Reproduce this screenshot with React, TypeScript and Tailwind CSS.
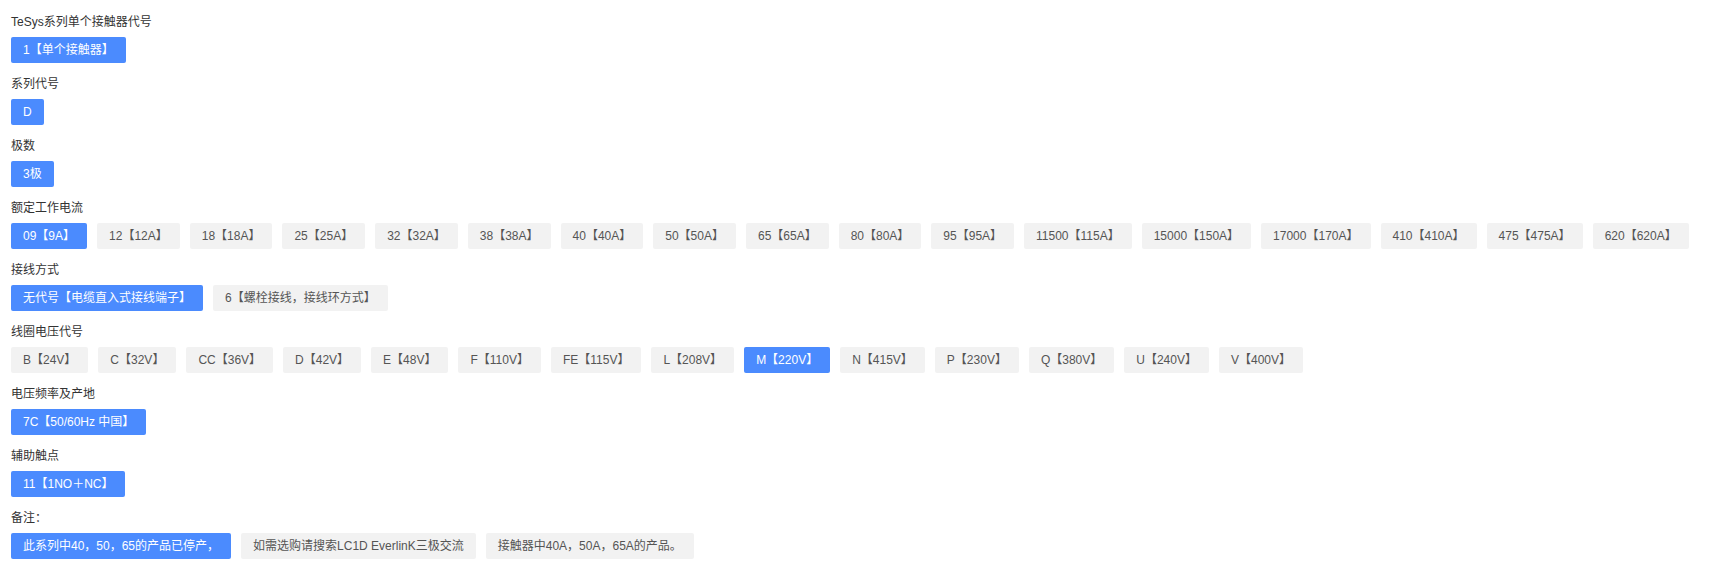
import React from "react";

type Group = { label: string; options: string[]; active: number };

const groups: Group[] = [
  { label: "TeSys系列单个接触器代号", options: ["1【单个接触器】"], active: 0 },
  { label: "系列代号", options: ["D"], active: 0 },
  { label: "极数", options: ["3极"], active: 0 },
  {
    label: "额定工作电流",
    options: [
      "09【9A】",
      "12【12A】",
      "18【18A】",
      "25【25A】",
      "32【32A】",
      "38【38A】",
      "40【40A】",
      "50【50A】",
      "65【65A】",
      "80【80A】",
      "95【95A】",
      "11500【115A】",
      "15000【150A】",
      "17000【170A】",
      "410【410A】",
      "475【475A】",
      "620【620A】",
    ],
    active: 0,
  },
  {
    label: "接线方式",
    options: ["无代号【电缆直入式接线端子】", "6【螺栓接线，接线环方式】"],
    active: 0,
  },
  {
    label: "线圈电压代号",
    options: [
      "B【24V】",
      "C【32V】",
      "CC【36V】",
      "D【42V】",
      "E【48V】",
      "F【110V】",
      "FE【115V】",
      "L【208V】",
      "M【220V】",
      "N【415V】",
      "P【230V】",
      "Q【380V】",
      "U【240V】",
      "V【400V】",
    ],
    active: 8,
  },
  { label: "电压频率及产地", options: ["7C【50/60Hz 中国】"], active: 0 },
  { label: "辅助触点", options: ["11【1NO＋NC】"], active: 0 },
  {
    label: "备注：",
    options: [
      "此系列中40，50，65的产品已停产，",
      "如需选购请搜索LC1D EverlinK三极交流",
      "接触器中40A，50A，65A的产品。",
    ],
    active: 0,
  },
];

export default function App() {
  return (
    <div
      className="w-[1712px] h-[563px] bg-white pl-[11px] pt-[12px] text-[12px]"
      style={{ fontFamily: '"Liberation Sans", "Noto Sans CJK SC", sans-serif' }}
    >
      {groups.map((g, gi) => (
        <div key={gi} className="mb-[11px]">
          <div className="h-[20px] leading-[20px] text-[#333333]">{g.label}</div>
          <div className="mt-[5px] flex flex-wrap gap-[10px]">
            {g.options.map((o, oi) => (
              <div
                key={oi}
                className={
                  oi === g.active
                    ? "h-[26px] leading-[26px] px-[12px] rounded-[2px] bg-[#4b8bfe] text-white whitespace-nowrap"
                    : "h-[26px] leading-[26px] px-[12px] rounded-[2px] bg-[#f2f2f2] text-[#555555] whitespace-nowrap"
                }
              >
                {o}
              </div>
            ))}
          </div>
        </div>
      ))}
    </div>
  );
}
